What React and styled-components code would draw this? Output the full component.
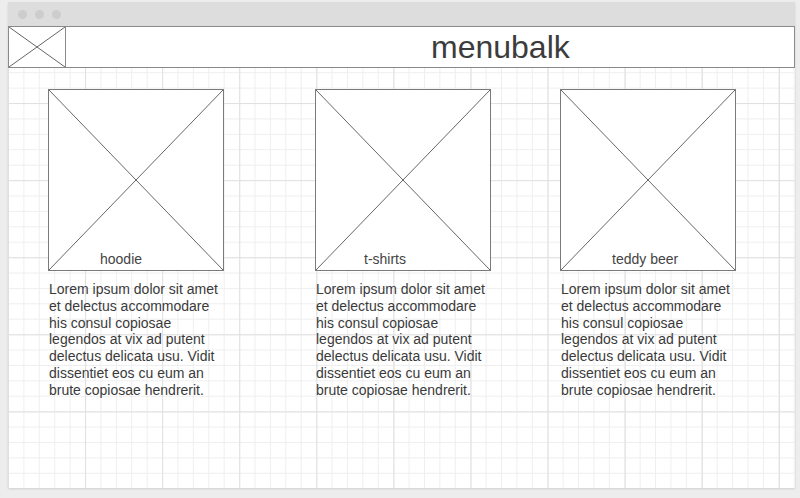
import React from "react";
import styled, { createGlobalStyle } from "styled-components";

const Global = createGlobalStyle`
  html, body { margin: 0; padding: 0; }
  body { font-family: "Liberation Sans", Arial, sans-serif; background: #ededed; }
`;

const Page = styled.div`
  width: 800px;
  height: 498px;
  box-sizing: border-box;
  padding: 2px 5px 10px 8px;
  background: #ededed;
  display: flex;
`;

const Window = styled.div`
  flex: 1;
  display: flex;
  flex-direction: column;
  background: #fff;
  box-shadow: 0 1px 2px rgba(0, 0, 0, 0.12);
`;

const TitleBar = styled.div`
  height: 24px;
  background: #dddddd;
  display: flex;
  align-items: center;
  gap: 8px;
  padding-left: 10px;
`;

const Dot = styled.span`
  width: 9px;
  height: 9px;
  border-radius: 50%;
  background: #cdcdcd;
`;

const Canvas = styled.div`
  flex: 1;
  display: flex;
  flex-direction: column;
  background-color: #fff;
  background-image:
    linear-gradient(to right, #e0e0e0 1px, transparent 1px),
    linear-gradient(to bottom, #e0e0e0 1px, transparent 1px),
    linear-gradient(to right, #eeeeee 1px, transparent 1px),
    linear-gradient(to bottom, #eeeeee 1px, transparent 1px);
  background-size: 77.1px 77.1px, 77.1px 77.1px, 15.42px 15.42px, 15.42px 15.42px;
`;

const Header = styled.div`
  height: 40px;
  border: 1px solid #8a8a8a;
  background: #fff;
  display: flex;
  align-items: stretch;
`;

const Logo = styled.div`
  width: 56px;
  border-right: 1px solid #8a8a8a;
  display: flex;
`;

const Title = styled.div`
  padding-left: 365px;
  font-size: 32px;
  line-height: 40px;
  color: #3c3c3c;
`;

const Products = styled.div`
  display: flex;
  padding-top: 21px;
`;

const Card = styled.div`
  width: 176px;
  margin-left: ${(p) => p.$offset}px;
  display: flex;
  flex-direction: column;
`;

const ImageBox = styled.div`
  position: relative;
  height: 180px;
  border: 1px solid #7a7a7a;
  background: #fff;
  display: flex;
  align-items: flex-end;
`;

const Cross = styled.svg`
  position: absolute;
  inset: 0;
  width: 100%;
  height: 100%;
`;

const Label = styled.span`
  position: relative;
  padding-left: ${(p) => p.$indent}px;
  padding-bottom: 3px;
  font-size: 14px;
  line-height: 16px;
  color: #444;
`;

const Desc = styled.p`
  margin: 10px 0 0 1px;
  font-size: 14px;
  line-height: 16.8px;
  color: #3a3a3a;
`;

const X = () => (
  <Cross viewBox="0 0 100 100" preserveAspectRatio="none">
    <line x1="0" y1="0" x2="100" y2="100" stroke="#666" strokeWidth="1" vectorEffect="non-scaling-stroke" />
    <line x1="100" y1="0" x2="0" y2="100" stroke="#666" strokeWidth="1" vectorEffect="non-scaling-stroke" />
  </Cross>
);

const LogoCross = styled.svg`
  width: 100%;
  height: 100%;
`;

const lines = [
  "Lorem ipsum dolor sit amet",
  "et delectus accommodare",
  "his consul copiosae",
  "legendos at vix ad putent",
  "delectus delicata usu. Vidit",
  "dissentiet eos cu eum an",
  "brute copiosae hendrerit.",
];

const products = [
  { name: "hoodie", offset: 40, indent: 51 },
  { name: "t-shirts", offset: 91, indent: 48 },
  { name: "teddy beer", offset: 69, indent: 51 },
];

export default function App() {
  return (
    <>
      <Global />
      <Page>
        <Window>
          <TitleBar>
            <Dot />
            <Dot />
            <Dot />
          </TitleBar>
          <Canvas>
            <Header>
              <Logo>
                <LogoCross viewBox="0 0 100 100" preserveAspectRatio="none">
                  <line x1="0" y1="0" x2="100" y2="100" stroke="#666" strokeWidth="1" vectorEffect="non-scaling-stroke" />
                  <line x1="100" y1="0" x2="0" y2="100" stroke="#666" strokeWidth="1" vectorEffect="non-scaling-stroke" />
                </LogoCross>
              </Logo>
              <Title>menubalk</Title>
            </Header>
            <Products>
              {products.map((p) => (
                <Card key={p.name} $offset={p.offset}>
                  <ImageBox>
                    <X />
                    <Label $indent={p.indent}>{p.name}</Label>
                  </ImageBox>
                  <Desc>
                    {lines.map((l, i) => (
                      <React.Fragment key={i}>
                        {l}
                        {i < lines.length - 1 && <br />}
                      </React.Fragment>
                    ))}
                  </Desc>
                </Card>
              ))}
            </Products>
          </Canvas>
        </Window>
      </Page>
    </>
  );
}
